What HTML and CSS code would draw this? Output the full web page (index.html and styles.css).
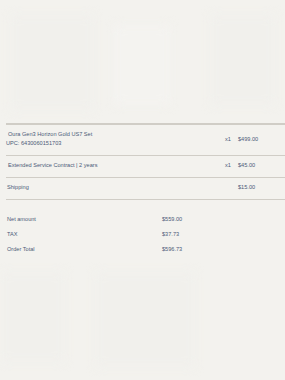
FILE: index.html
```html
<!DOCTYPE html>
<html lang="en">
<head>
<meta charset="utf-8">
<title>Order summary</title>
<link rel="stylesheet" href="styles.css">
</head>
<body>
<div class="page">
  <div class="hero">
    <div class="blur b1"></div>
    <div class="blur b2"></div>
    <div class="blur b3"></div>
  </div>
  <div class="order">
    <div class="items">
      <div class="row">
        <div class="name"><div>Oura Gen3 Horizon Gold US7 Set</div><div class="upc">UPC: 6430060151703</div></div>
        <div class="qty">x1</div>
        <div class="price">$499.00</div>
      </div>
      <div class="row">
        <div class="name">Extended Service Contract | 2 years</div>
        <div class="qty">x1</div>
        <div class="price">$45.00</div>
      </div>
      <div class="row">
        <div class="name ship">Shipping</div>
        <div class="qty"></div>
        <div class="price">$15.00</div>
      </div>
    </div>
    <div class="totals">
      <div class="trow"><span>Net amount</span><span>$559.00</span></div>
      <div class="trow"><span>TAX</span><span>$37.73</span></div>
      <div class="trow"><span>Order Total</span><span>$596.73</span></div>
    </div>
  </div>
  <div class="footer">
    <div class="blur b4"></div>
    <div class="blur b5"></div>
  </div>
</div>
</body>
</html>
```
FILE: styles.css
```css
html, body {
  margin: 0;
  padding: 0;
  background: #f3f2ee;
}
body {
  font-family: "Liberation Sans", Arial, sans-serif;
  color: #4b5a78;
  font-size: 5.6px;
}
.page {
  width: 285px;
  height: 380px;
  overflow: hidden;
}
.hero {
  height: 123px;
  display: flex;
  gap: 20px;
  padding: 15px 10px 0 10px;
  box-sizing: border-box;
}
.blur {
  background: #f1f0ec;
  filter: blur(5px);
  border-radius: 4px;
}
.b1 { width: 90px; height: 95px; }
.b2 { width: 60px; height: 80px; background: #f4f3f0; margin-top: 10px; }
.b3 { width: 70px; height: 90px; margin-left: 20px; }
.order {
  padding-left: 6px;
}
.items {
  border-top: 2px solid #d0cdc6;
}
.row {
  display: grid;
  grid-template-columns: 1fr 13px 47px;
  align-items: center;
  padding: 5px 0 7px 0;
  line-height: 9px;
  border-bottom: 1px solid #d0cdc6;
}
.name { padding-left: 2px; }
.name .upc { margin-left: -2px; }
.name.ship { padding-left: 1px; }
.totals {
  padding-top: 12px;
}
.trow {
  display: grid;
  grid-template-columns: 155px 1fr;
  line-height: 15px;
  padding-left: 1px;
}
.footer {
  display: flex;
  gap: 30px;
  padding: 15px 0 0 0;
}
.b4 { width: 65px; height: 90px; }
.b5 { width: 100px; height: 95px; background: #f1f0ec; }
```
